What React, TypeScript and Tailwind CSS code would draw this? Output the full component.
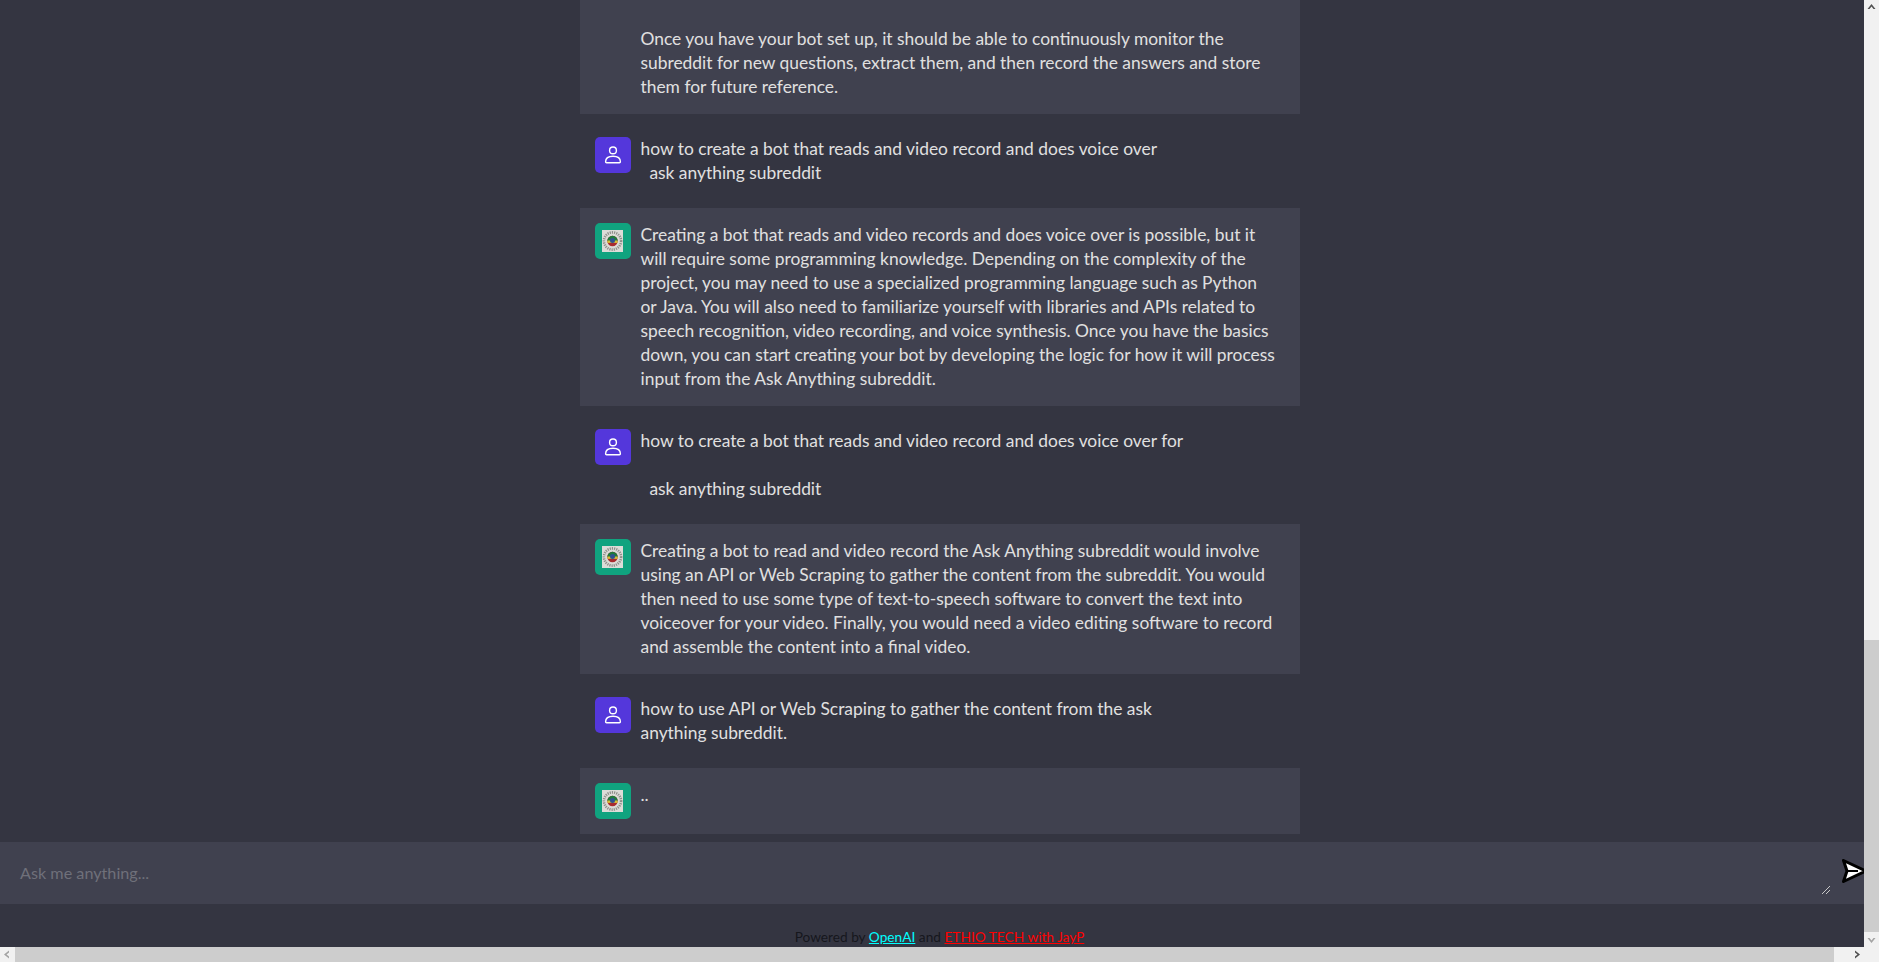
import React from 'react';

const userIcon = (
  <svg width="20" height="20" viewBox="0 0 20 20" fill="none" stroke="#fff" strokeWidth="1.4">
    <circle cx="10" cy="5.4" r="3.4" />
    <path d="M2.6 16.8c0-3.8 2.6-5.6 7.4-5.6s7.4 1.8 7.4 5.6c0 .7-.4 1-1 1H3.6c-.6 0-1-.3-1-1z" />
  </svg>
);

const botIcon = (
  <svg width="21" height="22" viewBox="0 0 21 22">
    <rect width="21" height="22" fill="#dcdcd8" />
    <circle cx="10.5" cy="11" r="8.6" fill="none" stroke="#8e8e8a" strokeWidth="2.6" strokeDasharray="1.2 1" />
    <circle cx="10.5" cy="11" r="5.2" fill="#a92a2e" />
    <path d="M5.3 11a5.2 5.2 0 0 1 10.4 0z" fill="#1f7a3d" />
    <rect x="5.4" y="10.5" width="10.2" height="2.4" fill="#d9bd36" />
    <circle cx="10.5" cy="10.5" r="2.5" fill="#2f5390" />
  </svg>
);

const Row = ({ bot, children }: { bot?: boolean; children: React.ReactNode }) => (
  <div className={bot ? 'flex bg-[#40414f] p-[15px]' : 'flex px-[15px] py-[23px]'}>
    <div className={`flex h-9 w-9 shrink-0 items-center justify-center rounded-[5px] ${bot ? 'bg-[#10a37f]' : 'bg-[#5437db]'}`}>
      {bot ? botIcon : userIcon}
    </div>
    <div className="ml-[10px] whitespace-pre-wrap text-[#e0e0e0]">{children}</div>
  </div>
);

const Arrow = ({ points, dim }: { points: string; dim?: boolean }) => (
  <svg width="15" height="15" viewBox="0 0 15 15" fill={dim ? '#a3a3a3' : '#505050'}>
    <polygon points={points} />
  </svg>
);

export default function App() {
  return (
    <div className="flex h-screen w-full flex-col overflow-hidden bg-[#343541] font-['Lato',sans-serif] text-[17.4px] leading-6">
      <div className="flex min-h-0 flex-1">
        <div className="flex min-w-0 flex-1 flex-col">
          <div className="flex min-h-0 flex-1 flex-col items-center justify-end pb-2 pl-[15px]">
            <div className="w-[720px] shrink-0">
              <Row bot>
                {'Keep the bot running on a schedule.\n\nUpdate your answer repo regularly.\n\nOnce you have your bot set up, it should be able to continuously monitor the\nsubreddit for new questions, extract them, and then record the answers and store\nthem for future reference.'}
              </Row>
              <Row>{'how to create a bot that reads and video record and does voice over\n  ask anything subreddit'}</Row>
              <Row bot>
                {'Creating a bot that reads and video records and does voice over is possible, but it\nwill require some programming knowledge. Depending on the complexity of the\nproject, you may need to use a specialized programming language such as Python\nor Java. You will also need to familiarize yourself with libraries and APIs related to\nspeech recognition, video recording, and voice synthesis. Once you have the basics\ndown, you can start creating your bot by developing the logic for how it will process\ninput from the Ask Anything subreddit.'}
              </Row>
              <Row>{'how to create a bot that reads and video record and does voice over for\n\n  ask anything subreddit'}</Row>
              <Row bot>
                {'Creating a bot to read and video record the Ask Anything subreddit would involve\nusing an API or Web Scraping to gather the content from the subreddit. You would\nthen need to use some type of text-to-speech software to convert the text into\nvoiceover for your video. Finally, you would need a video editing software to record\nand assemble the content into a final video.'}
              </Row>
              <Row>{'how to use API or Web Scraping to gather the content from the ask\nanything subreddit.'}</Row>
              <Row bot>..</Row>
            </div>
          </div>
          <div className="relative flex h-[62px] shrink-0 items-center bg-[#40414f] pl-5 text-[16.2px] text-[#6f707a]">
            Ask me anything...
            <svg className="absolute bottom-[10px] right-[34px]" width="8" height="8" viewBox="0 0 8 8" stroke="#c8c8c8" strokeWidth="1">
              <path d="M0 8 8 0M4 8l4-4" />
            </svg>
            <svg className="absolute right-0 top-[17px]" width="22" height="24" viewBox="0 0 22 24">
              <path d="M1.5 1.5 24 12 1.5 22.5 5 12z" fill="#fff" stroke="#000" strokeWidth="3" strokeLinejoin="round" />
              <path d="M5 12h11" stroke="#000" strokeWidth="2" />
            </svg>
          </div>
          <div className="flex h-[43px] shrink-0 items-end justify-center pl-[15px] text-[13.7px] leading-[20px] text-[#16171d]">
            <span>
              Powered by <span className="text-[#00ffff] underline">OpenAI</span> and{' '}
              <span className="text-[#ff0000] underline">ETHIO TECH with JayP</span>
            </span>
          </div>
        </div>
        <div className="flex w-[15px] shrink-0 flex-col bg-[#f1f1f1]">
          <Arrow points="7.5,4 11.5,9 9.5,9 7.5,6.5 5.5,9 3.5,9" />
          <div className="mt-[625px] w-full flex-1 bg-[#cdcdcd]" />
          <Arrow dim points="3.5,6 5.5,6 7.5,8.5 9.5,6 11.5,6 7.5,11" />
        </div>
      </div>
      <div className="flex h-[15px] shrink-0 bg-[#cdcdcd]">
        <div className="w-[15px] bg-[#f1f1f1]">
          <Arrow dim points="9,3.5 9,5.5 6.5,7.5 9,9.5 9,11.5 4,7.5" />
        </div>
        <div className="flex-1" />
        <div className="flex w-[45px] justify-end bg-[#f1f1f1]">
          <div className="mr-[15px]">
            <Arrow points="6,3.5 6,5.5 8.5,7.5 6,9.5 6,11.5 11,7.5" />
          </div>
        </div>
      </div>
    </div>
  );
}
